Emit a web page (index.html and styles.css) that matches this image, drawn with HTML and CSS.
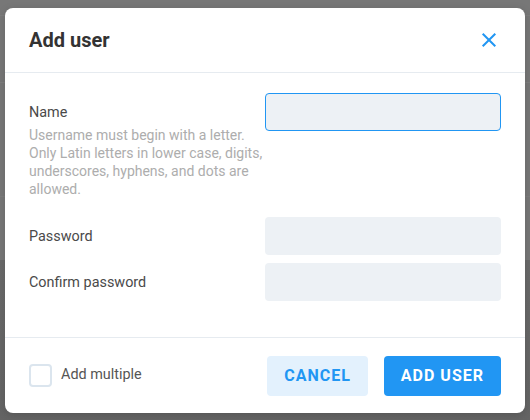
FILE: index.html
```html
<!DOCTYPE html>
<html lang="en">
<head>
<meta charset="utf-8">
<title>Add user</title>
<link rel="stylesheet" href="styles.css">
</head>
<body>
<div class="backdrop">
  <div class="modal">
    <div class="modal-header">
      <h2 class="modal-title">Add user</h2>
      <button class="close-btn" aria-label="Close">
        <svg viewBox="0 0 24 24" width="24" height="24"><path d="M5.7 5.7L18.3 18.3M18.3 5.7L5.7 18.3" stroke="#2196f3" stroke-width="2" fill="none"/></svg>
      </button>
    </div>
    <div class="modal-body">
      <div class="form-row row-name">
        <div class="label-col">
          <div class="field-label">Name</div>
          <div class="field-help">Username must begin with a letter. Only Latin letters in lower case, digits, underscores, hyphens, and dots are allowed.</div>
        </div>
        <div class="input-col"><input class="text-input focused" type="text"></div>
      </div>
      <div class="form-row row-center">
        <div class="label-col"><div class="field-label">Password</div></div>
        <div class="input-col"><input class="text-input" type="password"></div>
      </div>
      <div class="form-row row-center">
        <div class="label-col"><div class="field-label">Confirm password</div></div>
        <div class="input-col"><input class="text-input" type="password"></div>
      </div>
    </div>
    <div class="modal-footer">
      <label class="checkbox-wrap">
        <span class="checkbox"></span>
        <span class="checkbox-label">Add multiple</span>
      </label>
      <div class="actions">
        <button class="btn btn-secondary">Cancel</button>
        <button class="btn btn-primary">Add user</button>
      </div>
    </div>
  </div>
</div>
</body>
</html>
```
FILE: styles.css
```css
* { box-sizing: border-box; }
html, body { margin: 0; padding: 0; }
body {
  font-family: Roboto, "Liberation Sans", Arial, sans-serif;
  width: 530px;
  height: 420px;
  overflow: hidden;
}
.backdrop {
  width: 530px;
  height: 420px;
  padding: 8px 5px 0 5px;
  background:
    linear-gradient(to bottom,
      transparent 15px, #7d7d7d 15px, #7d7d7d 16px, transparent 16px,
      transparent 82px, #7e7e7e 82px, #7e7e7e 83px, transparent 83px,
      transparent 196px, #7c7c7c 196px, #7c7c7c 197px, transparent 197px),
    linear-gradient(to bottom, #777777 0, #777777 260px, #6a6a6a 260px, #646464 420px);
}
.modal {
  width: 520px;
  height: 405px;
  background: #fff;
  border-radius: 8px;
  display: flex;
  flex-direction: column;
  box-shadow: 0 2px 8px rgba(0,0,0,0.15);
}
.modal-header {
  height: 65px;
  display: flex;
  align-items: center;
  justify-content: space-between;
  padding: 0 24px;
  border-bottom: 1px solid #e6ebf0;
}
.modal-title {
  margin: 0;
  font-size: 20px;
  font-weight: 700;
  color: #333;
}
.close-btn {
  width: 24px;
  height: 24px;
  padding: 0;
  border: 0;
  background: none;
  display: flex;
}
.modal-body {
  flex: 1;
  padding: 20px 24px 0 24px;
}
.form-row {
  display: grid;
  grid-template-columns: 236px 236px;
}
.row-name { margin-bottom: 19px; }
.row-center { align-items: center; margin-bottom: 8px; }
.row-center .field-label { padding-top: 2px; }
.row-name .field-label { margin-top: 10px; }
.field-label {
  font-size: 14.4px;
  line-height: 20px;
  color: #4a4a4a;
}
.field-help {
  margin-top: 3px;
  font-size: 14px;
  line-height: 18px;
  color: #adadad;
}
.text-input {
  display: block;
  width: 236px;
  height: 38px;
  border: 1px solid transparent;
  border-radius: 4px;
  background: #edf1f5;
  outline: none;
  font: inherit;
}
.text-input.focused { border-color: #2196f3; }
.modal-footer {
  height: 76px;
  border-top: 1px solid #e6ebf0;
  display: flex;
  align-items: center;
  justify-content: space-between;
  padding: 0 24px;
}
.checkbox-wrap {
  display: flex;
  align-items: center;
  gap: 9px;
}
.checkbox {
  width: 23px;
  height: 23px;
  border: 2px solid #dbe5ee;
  border-radius: 4px;
  background: #fff;
}
.checkbox-label {
  font-size: 14.4px;
  color: #555;
  line-height: 20px;
  margin-top: -2px;
}
.actions {
  display: flex;
  gap: 16px;
}
.btn {
  height: 40px;
  padding: 0 17px;
  border: 0;
  border-radius: 4px;
  font-family: Roboto, "Liberation Sans", Arial, sans-serif;
  font-size: 16px;
  font-weight: 700;
  letter-spacing: 1px;
  text-transform: uppercase;
}
.btn-secondary {
  background: #e3f1fd;
  color: #2196f3;
}
.btn-primary {
  background: #2196f3;
  color: #fff;
}
```
